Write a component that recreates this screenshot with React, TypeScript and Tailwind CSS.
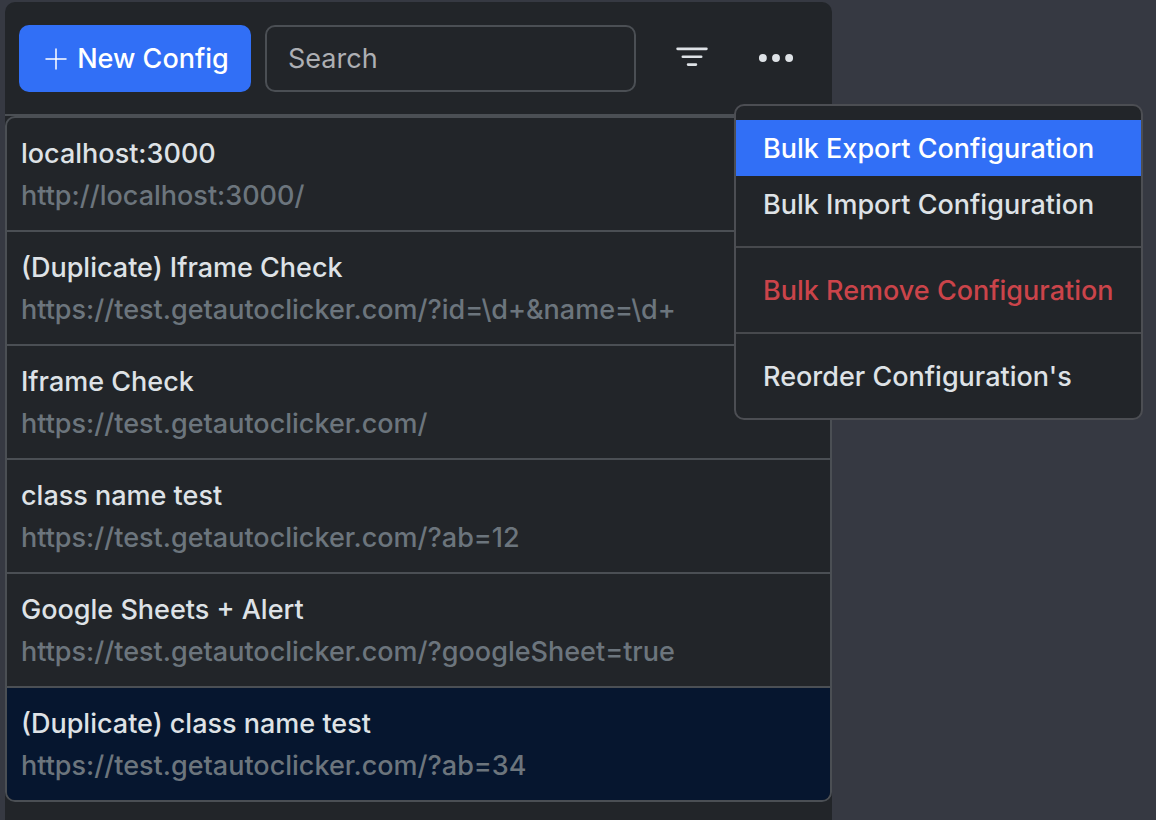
import { useState } from "react";
import { BsFilter, BsThreeDots } from "react-icons/bs";
import clsx from "clsx";

const configs = [
  { name: "localhost:3000", url: "http://localhost:3000/" },
  { name: "(Duplicate) Iframe Check", url: "https://test.getautoclicker.com/?id=\\d+&name=\\d+" },
  { name: "Iframe Check", url: "https://test.getautoclicker.com/" },
  { name: "class name test", url: "https://test.getautoclicker.com/?ab=12" },
  { name: "Google Sheets + Alert", url: "https://test.getautoclicker.com/?googleSheet=true" },
  { name: "(Duplicate) class name test", url: "https://test.getautoclicker.com/?ab=34" },
];

function PlusIcon() {
  return (
    <svg viewBox="0 0 22 22" className="size-[22px]" stroke="currentColor" strokeWidth="1.5" strokeLinecap="round" aria-hidden="true">
      <path d="M11 1v20M1 11h20" />
    </svg>
  );
}

function MenuItem({ label, active, danger }: { label: string; active?: boolean; danger?: boolean }) {
  return (
    <button
      type="button"
      role="menuitem"
      className={clsx(
        "block w-full pt-2 pr-6 pb-1.5 pl-[27px] text-left whitespace-nowrap",
        active && "bg-[#316ff6] text-white",
        danger && "text-[#cb444a]",
      )}
    >
      {label}
    </button>
  );
}

function Divider() {
  return <hr className="my-3.5 border-t-2 border-[#47494d]" />;
}

function ActionsMenu() {
  return (
    <div
      role="menu"
      className="absolute top-full left-0 z-10 mt-3 w-[409px] rounded-[10px] border-2 border-[#4c4e53] bg-[#222529] py-3.5"
    >
      <MenuItem label="Bulk Export Configuration" active />
      <MenuItem label="Bulk Import Configuration" />
      <Divider />
      <MenuItem label="Bulk Remove Configuration" danger />
      <Divider />
      <MenuItem label="Reorder Configuration's" />
    </div>
  );
}

export default function App() {
  const [open, setOpen] = useState(true);
  const [selected, setSelected] = useState(5);

  return (
    <div className="flex min-h-screen bg-[#363942] pt-0.5 pr-[324px] pl-[5px] font-['Inter',sans-serif] text-[27px] leading-[42px] font-medium text-[#dee2e6]">
      <main className="min-w-0 flex-1 rounded-t-[10px] bg-[#222529]">
        <header className="flex items-stretch border-b-2 border-[#4b4f54] px-3.5 pt-[23px] pb-[22px]">
          <button type="button" className="flex h-[67px] w-[232px] shrink-0 items-center justify-center gap-2.5 rounded-[10px] bg-[#316ff6] pl-1 whitespace-nowrap text-white">
            <PlusIcon />
            New Config
          </button>
          <input
            type="search"
            aria-label="Search"
            placeholder="Search"
            className="ml-3.5 w-full min-w-0 flex-1 rounded-[10px] border-2 border-[#4b4f54] bg-transparent px-[21px] font-normal placeholder:text-[#adafb3]"
          />
          <button type="button" aria-label="Filter" className="ml-3.5 flex w-[84px] shrink-0 items-center justify-center pb-0.5">
            <BsFilter className="size-[42px]" />
          </button>
          <div className="relative flex w-[84px] shrink-0">
            <button
              type="button"
              aria-label="More actions"
              aria-expanded={open}
              onClick={() => setOpen(!open)}
              className="flex flex-1 items-center justify-center pb-0.5"
            >
              <BsThreeDots className="size-[42px]" />
            </button>
            {open && <ActionsMenu />}
          </div>
        </header>
        <ul className="divide-y-2 divide-[#4b4f54] overflow-hidden rounded-[10px] border-2 border-[#4b4f54]">
          {configs.map((config, index) => (
            <li key={config.name}>
              <button
                type="button"
                onClick={() => setSelected(index)}
                className={clsx("block w-full px-3.5 pt-[15px] pb-[13px] text-left", index === selected && "bg-[#06162f]")}
              >
                <span className="block truncate">{config.name}</span>
                <span className="block truncate text-[#6c757d]">{config.url}</span>
              </button>
            </li>
          ))}
        </ul>
      </main>
    </div>
  );
}
